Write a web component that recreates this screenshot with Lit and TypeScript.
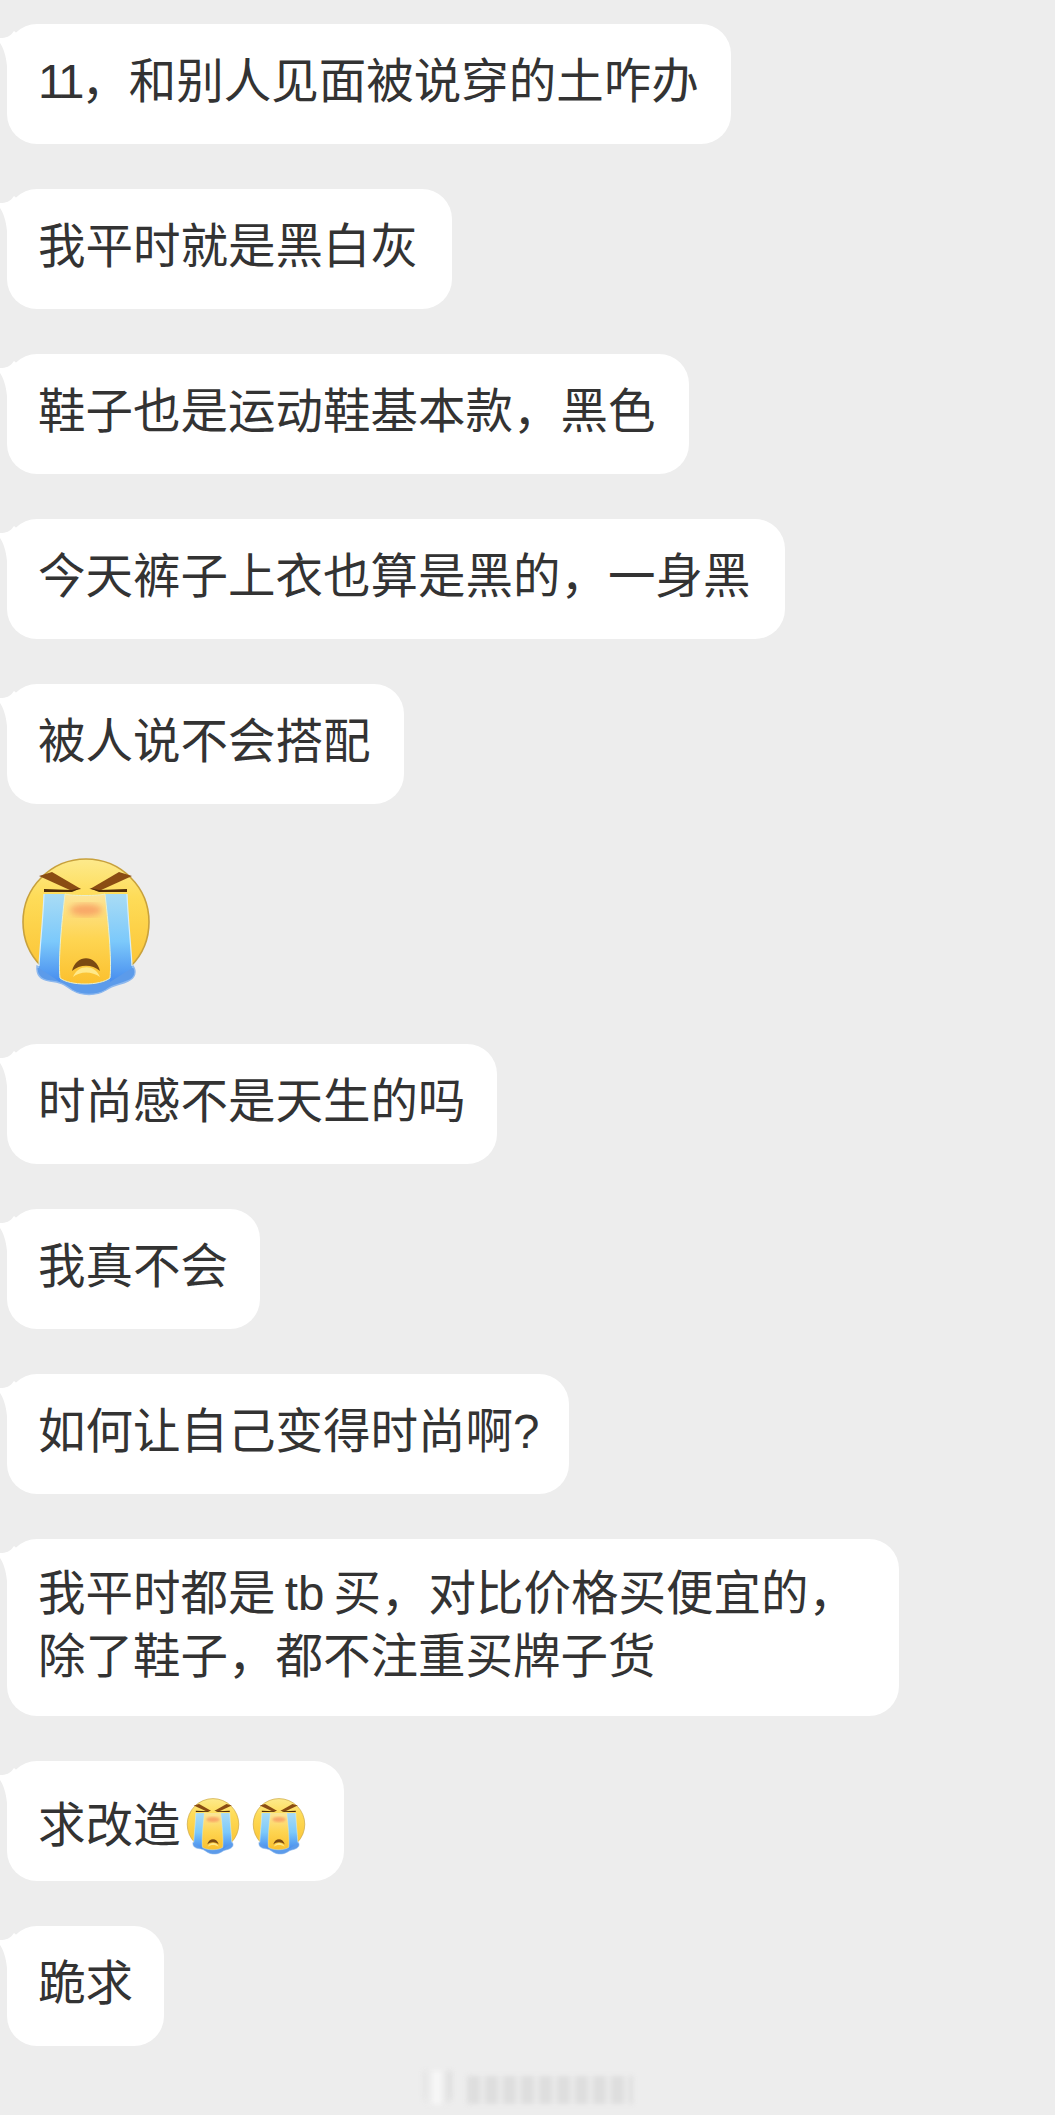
import { LitElement, html, css, svg, TemplateResult } from 'lit';
import { customElement, property } from 'lit/decorators.js';

let uid = 0;

@customElement('cry-emoji')
export class CryEmoji extends LitElement {
  static styles = css`
    :host {
      display: inline-block;
      line-height: 0;
    }
    svg {
      display: block;
      width: 100%;
      height: 100%;
    }
  `;

  @property() label = '';

  id_ = `e${uid++}`;

  render() {
    const id = this.id_;
    return html`<svg viewBox="20 26 132 140" role="img" aria-label=${this.label}>
      ${svg`
      <defs>
        <linearGradient id="${id}f" x1="0" y1="0" x2="0" y2="1">
          <stop offset="0" stop-color="#fdea8c" />
          <stop offset="0.3" stop-color="#fedc58" />
          <stop offset="1" stop-color="#fbbf2e" />
        </linearGradient>
        <linearGradient id="${id}t" gradientUnits="userSpaceOnUse" x1="0" y1="64" x2="0" y2="150">
          <stop offset="0" stop-color="#a9dcf5" />
          <stop offset="0.55" stop-color="#7cc9fb" />
          <stop offset="1" stop-color="#4a90ef" />
        </linearGradient>
        <linearGradient id="${id}c" x1="0" y1="0" x2="0" y2="1">
          <stop offset="0" stop-color="#fce59a" />
          <stop offset="0.5" stop-color="#fed552" />
          <stop offset="1" stop-color="#fbc02e" />
        </linearGradient>
        <filter id="${id}b"><feGaussianBlur stdDeviation="3" /></filter>
      </defs>
      <circle cx="86" cy="92" r="63" fill="url(#${id}f)" stroke="#c8a13c" stroke-width="1.6" />
      <path d="M37 136 C36 146 42 150 50 151 C60 152 64 154 72 160 C82 166 96 166 106 160 C114 154 120 155 128 151 C135 148 137 142 133 136 L120 142 L86 150 L50 142 Z" fill="#5c9bea" stroke="#8db8ee" stroke-width="1.4" />
      <path d="M44 64 C43 90 40 115 39 138 L60 152 L65 64 Z" fill="url(#${id}t)" />
      <path d="M105 64 L110 152 L132 138 C131 115 128 90 127 64 Z" fill="url(#${id}t)" />
      <path d="M44 64 C43 90 40 115 39 136" fill="none" stroke="#d6eefa" stroke-width="1.2" />
      <path d="M127 64 C128 90 131 115 132 136" fill="none" stroke="#d6eefa" stroke-width="1.2" />
      <path d="M65 64 C70 66 100 66 105 64 C108 90 112 130 110 148 C100 156 70 156 60 148 C58 130 62 90 65 64 Z" fill="url(#${id}c)" stroke="#e8f0d0" stroke-width="1" />
      <ellipse cx="86" cy="80" rx="16" ry="6" fill="#f7935f" opacity="0.75" filter="url(#${id}b)" />
      <path d="M39 46 L52 42 L81 59 L72 61 Z" fill="#8a4c13" />
      <path d="M132 46 L119 42 L90 59 L99 61 Z" fill="#8a4c13" />
      <path d="M44 59 L72 60 L81 58 L72 62 L44 62 Z" fill="#4f2c08" />
      <path d="M127 59 L99 60 L89 58 L99 62 L127 62 Z" fill="#4f2c08" />
      <path d="M72 141 C76 124 96 124 100 141 C92 134 80 134 72 141 Z" fill="#7b4a12" />
      <path d="M73 147 C78 134 95 134 100 147 C92 141 80 141 73 147 Z" fill="#ffe98a" />
      `}
    </svg>`;
  }
}

type Msg = { lines: (string | TemplateResult)[]; emoji?: number; w: number };

const messages: (Msg | 'emoji')[] = [
  { lines: [html`<span class="num">11</span>，和别人见面被说穿的土咋办`], w: 724 },
  { lines: ['我平时就是黑白灰'], w: 445 },
  { lines: ['鞋子也是运动鞋基本款，黑色'], w: 682 },
  { lines: ['今天裤子上衣也算是黑的，一身黑'], w: 778 },
  { lines: ['被人说不会搭配'], w: 397 },
  'emoji',
  { lines: ['时尚感不是天生的吗'], w: 490 },
  { lines: ['我真不会'], w: 253 },
  { lines: ['如何让自己变得时尚啊?'], w: 562 },
  {
    lines: [html`我平时都是<span class="tb"> tb </span>买，对比价格买便宜的，`, '除了鞋子，都不注重买牌子货'],
    w: 892,
  },
  { lines: ['求改造'], emoji: 2, w: 337 },
  { lines: ['跪求'], w: 157 },
];

@customElement('app-root')
export class AppRoot extends LitElement {
  static styles = css`
    :host {
      display: block;
      width: 1055px;
      height: 2115px;
      overflow: hidden;
      background: #ededed;
      font-family: 'Liberation Sans', 'Noto Sans CJK SC', sans-serif;
      color: #333;
    }
    .list {
      display: flex;
      flex-direction: column;
      align-items: flex-start;
      gap: 45px;
      padding: 24px 0 0 7px;
    }
    .bubble {
      position: relative;
      box-sizing: border-box;
      min-height: 120px;
      padding: 24px 0 28px 31px;
      display: flex;
      flex-direction: column;
      justify-content: center;
      background: #fff;
      border-radius: 30px;
      font-size: 47.5px;
      line-height: 62.5px;
      white-space: nowrap;
    }
    .tail {
      position: absolute;
      left: -7px;
      top: 5px;
      width: 24px;
      height: 40px;
    }
    .line {
      display: flex;
      align-items: center;
    }
    .line.has-emoji {
      margin: 7px 0 -7px;
    }
    .num {
      letter-spacing: -3px;
    }
    .tb {
      word-spacing: -4px;
      white-space: pre;
    }
    .line cry-emoji {
      width: 54px;
      height: 58px;
      margin-left: 5px;
    }
    .line cry-emoji + cry-emoji {
      margin-left: 12px;
    }
    .big {
      width: 132px;
      height: 140px;
      margin: 7px 0 3px 13px;
    }
    .mark {
      display: flex;
      gap: 15px;
      margin: 25px 0 0 423px;
      filter: blur(2.5px);
    }
    .cup {
      width: 29px;
      height: 33px;
      background: linear-gradient(90deg, #e2e2e2, #fafafa 50%, #dadada);
      border-radius: 0 0 8px 8px;
    }
    .brand {
      width: 166px;
      height: 28px;
      margin-top: 5px;
      background: repeating-linear-gradient(90deg, #dedede 0 13px, #ebebeb 13px 18px);
    }
  `;

  render() {
    return html`<div class="list">
        ${messages.map((m) =>
          m === 'emoji'
            ? html`<cry-emoji class="big" label="大哭"></cry-emoji>`
            : html`<div class="bubble" style="width:${m.w}px">
                <svg class="tail" viewBox="0 0 24 40">
                  <path d="M7 37 C6 26 3 18 0 14 L0 9 C6 9 10 8 14 2 L24 10 L24 37 Z" fill="#fff" />
                </svg>
                ${m.lines.map(
                  (l) => html`<div class="line ${m.emoji ? 'has-emoji' : ''}">
                    <span>${l}</span>
                    ${Array.from({ length: m.emoji ?? 0 }).map(
                      () => html`<cry-emoji label="大哭"></cry-emoji>`,
                    )}
                  </div>`,
                )}
              </div>`,
        )}
      </div>
      <div class="mark">
        <div class="cup"></div>
        <div class="brand"></div>
      </div>`;
  }
}
